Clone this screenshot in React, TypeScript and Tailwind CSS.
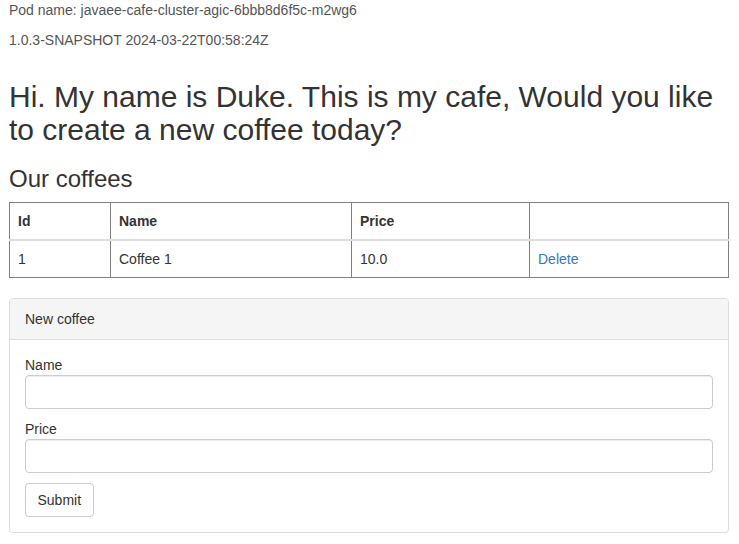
import React from 'react';

const coffees = [{ id: 1, name: 'Coffee 1', price: '10.0' }];

export default function App() {
  return (
    <div className="min-h-screen bg-white pl-[9px] pr-[10px] text-[14px] leading-[20px] text-[#333] font-['Liberation_Sans',Arial,sans-serif]">
      {/* build info */}
      <div>
        <p className="mb-[10px] text-[#555]">Pod name: javaee-cafe-cluster-agic-6bbb8d6f5c-m2wg6</p>
        <p className="mb-[10px] text-[#555]">1.0.3-SNAPSHOT 2024-03-22T00:58:24Z</p>
      </div>

      <h1 className="mt-[30px] mb-[10px] text-[30px] leading-[33px] font-normal">
        Hi. My name is Duke. This is my cafe, Would you like to create a new coffee today?
      </h1>

      <h3 className="mt-[20px] mb-[10px] text-[24px] leading-[26px] font-normal">Our coffees</h3>

      {/* coffee table */}
      <table className="mb-[20px] w-full border-collapse border border-[#808080]">
        <thead>
          <tr>
            <th className="w-[101px] border border-[#808080] border-b-2 border-b-[#ddd] p-[8px] text-left font-bold">Id</th>
            <th className="w-[241px] border border-[#808080] border-b-2 border-b-[#ddd] p-[8px] text-left font-bold">Name</th>
            <th className="w-[178px] border border-[#808080] border-b-2 border-b-[#ddd] p-[8px] text-left font-bold">Price</th>
            <th className="border border-[#808080] border-b-2 border-b-[#ddd] p-[8px]"></th>
          </tr>
        </thead>
        <tbody>
          {coffees.map((c) => (
            <tr key={c.id}>
              <td className="border border-[#808080] p-[8px]">{c.id}</td>
              <td className="border border-[#808080] p-[8px]">{c.name}</td>
              <td className="border border-[#808080] p-[8px]">{c.price}</td>
              <td className="border border-[#808080] p-[8px]">
                <a href="#" className="text-[#337ab7]">Delete</a>
              </td>
            </tr>
          ))}
        </tbody>
      </table>

      {/* new coffee panel */}
      <div className="rounded-[4px] border border-[#ddd] bg-white">
        <div className="rounded-t-[3px] border-b border-[#ddd] bg-[#f5f5f5] px-[15px] py-[10px]">New coffee</div>
        <div className="flex flex-col p-[15px]">
          <label className="block">Name</label>
          <input className="h-[34px] w-full rounded-[4px] border border-[#ccc] px-[12px] shadow-[inset_0_1px_1px_rgba(0,0,0,0.075)]" />
          <label className="mt-[10px] block">Price</label>
          <input className="h-[34px] w-full rounded-[4px] border border-[#ccc] px-[12px] shadow-[inset_0_1px_1px_rgba(0,0,0,0.075)]" />
          <div className="mt-[10px]">
            <button className="h-[34px] rounded-[4px] border border-[#ccc] bg-white px-[11.5px] text-[#333]">Submit</button>
          </div>
        </div>
      </div>
    </div>
  );
}
